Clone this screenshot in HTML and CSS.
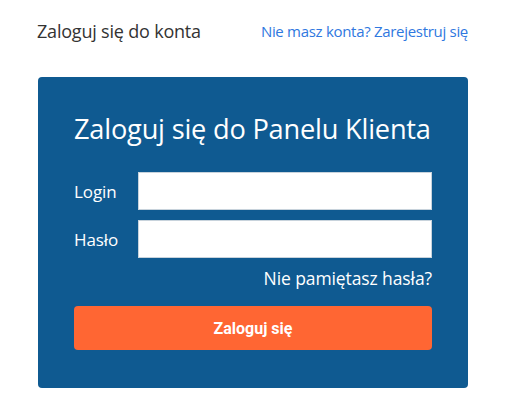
FILE: index.html
```html
<!DOCTYPE html>
<html lang="pl">
<head>
<meta charset="utf-8">
<link rel="stylesheet" href="styles.css">
</head>
<body>
<div class="wrap">
  <div class="top">
    <span class="top-title">Zaloguj się do konta</span>
    <a class="top-link" href="#">Nie masz konta? Zarejestruj się</a>
  </div>
  <div class="panel">
    <h1 class="panel-title">Zaloguj się do Panelu Klienta</h1>
    <div class="row">
      <label class="label">Login</label>
      <input class="input" type="text">
    </div>
    <div class="row">
      <label class="label">Hasło</label>
      <input class="input" type="password">
    </div>
    <div class="forgot"><a href="#">Nie pamiętasz hasła?</a></div>
    <button class="btn">Zaloguj się</button>
  </div>
</div>
</body>
</html>
```
FILE: styles.css
```css
html, body { margin: 0; padding: 0; background: #fff; }
body { font-family: "Open Sans", "Noto Sans", sans-serif; }
.wrap { width: 432px; margin-left: 37px; padding-top: 18px; }
.top { display: flex; justify-content: space-between; align-items: center; height: 26px; padding-right: 1px; }
.top-title { font-size: 18px; color: #333; letter-spacing: -0.2px; }
.top-link { font-size: 15px; color: #2f78e0; text-decoration: none; letter-spacing: -0.3px; }
.panel { margin-top: 33px; margin-left: 1px; width: 430px; box-sizing: border-box; background: #0f5a91; border-radius: 4px; padding: 36px 36px 38px 36px; color: #fff; }
.panel-title { margin: 0 0 27px; font-weight: 400; font-size: 27.2px; line-height: 32px; letter-spacing: -0.2px; white-space: nowrap; }
.row { display: flex; align-items: center; margin-bottom: 10px; }
.label { width: 64px; font-size: 17px; font-weight: 500; letter-spacing: -0.1px; }
.input { flex: 1; height: 38px; box-sizing: border-box; border: 1px solid #c8d3dc; background: #fff; margin: 0; padding: 0 8px; }
.forgot { text-align: right; margin-top: 7px; line-height: 20px; }
.forgot a { color: #fff; text-decoration: none; font-size: 17.5px; font-weight: 500; letter-spacing: -0.1px; }
.btn { display: block; width: 100%; height: 44px; margin-top: 17px; border: 0; border-radius: 4px; background: #ff6633; color: #fff; font-family: Roboto, "Liberation Sans", sans-serif; font-weight: 700; font-size: 16px; }
```
